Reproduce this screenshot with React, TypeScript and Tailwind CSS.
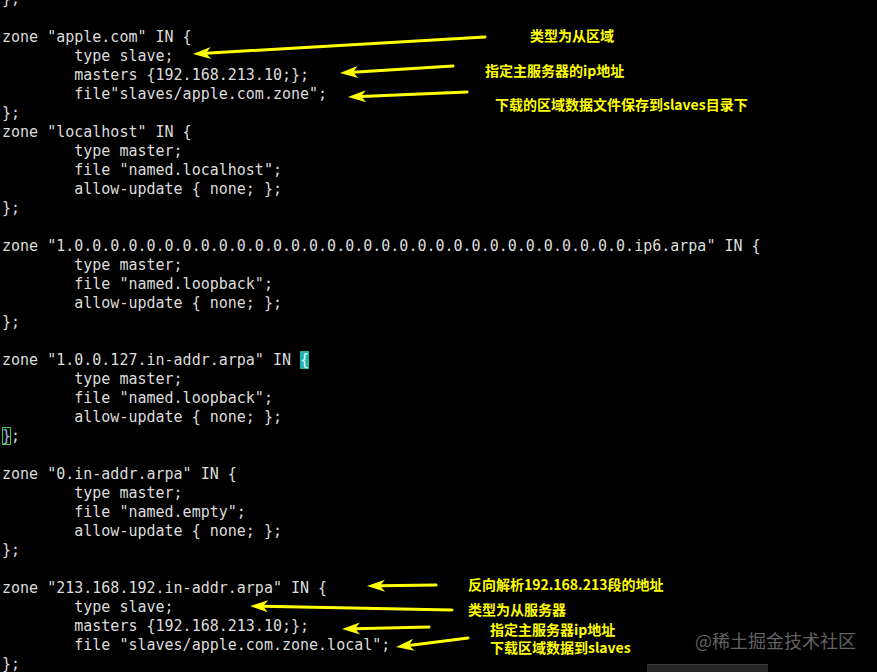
import React from 'react';

const T = '        ';

const lines: string[] = [
  '};',
  '',
  'zone "apple.com" IN {',
  `${T}type slave;`,
  `${T}masters {192.168.213.10;};`,
  `${T}file"slaves/apple.com.zone";`,
  '};',
  'zone "localhost" IN {',
  `${T}type master;`,
  `${T}file "named.localhost";`,
  `${T}allow-update { none; };`,
  '};',
  '',
  'zone "1.0.0.0.0.0.0.0.0.0.0.0.0.0.0.0.0.0.0.0.0.0.0.0.0.0.0.0.0.0.0.0.ip6.arpa" IN {',
  `${T}type master;`,
  `${T}file "named.loopback";`,
  `${T}allow-update { none; };`,
  '};',
  '',
  'CURSOR',
  `${T}type master;`,
  `${T}file "named.loopback";`,
  `${T}allow-update { none; };`,
  'MATCH',
  '',
  'zone "0.in-addr.arpa" IN {',
  `${T}type master;`,
  `${T}file "named.empty";`,
  `${T}allow-update { none; };`,
  '};',
  '',
  'zone "213.168.192.in-addr.arpa" IN {',
  `${T}type slave;`,
  `${T}masters {192.168.213.10;};`,
  `${T}file "slaves/apple.com.zone.local";`,
  '};',
];

// tail -> tip
const arrows: [number, number, number, number][] = [
  [485, 37, 193, 54],
  [453, 66, 340, 73],
  [467, 92, 348, 97],
  [436, 585, 367, 586],
  [452, 610, 250, 606],
  [429, 627, 342, 629],
  [468, 638, 396, 647],
];

const notes: { text: string[]; left: number; top: number }[] = [
  { text: ['类型为从区域'], left: 530, top: 26 },
  { text: ['指定主服务器的ip地址'], left: 485, top: 61 },
  { text: ['下载的区域数据文件保存到slaves目录下'], left: 495, top: 95 },
  { text: ['反向解析192.168.213段的地址'], left: 468, top: 575 },
  { text: ['类型为从服务器'], left: 468, top: 600 },
  { text: ['指定主服务器ip地址', '下载区域数据到slaves'], left: 490, top: 620 },
];

function Arrow({ a }: { a: [number, number, number, number] }) {
  const [x1, y1, x2, y2] = a;
  const dx = x2 - x1;
  const dy = y2 - y1;
  const len = Math.hypot(dx, dy);
  const ux = dx / len;
  const uy = dy / len;
  const nx = -uy;
  const ny = ux;
  const hl = 18;
  const hw = 6;
  const bx = x2 - ux * hl;
  const by = y2 - uy * hl;
  const kx = x2 - ux * (hl - 5);
  const ky = y2 - uy * (hl - 5);
  const pts = [
    [x2, y2],
    [bx + nx * hw, by + ny * hw],
    [kx, ky],
    [bx - nx * hw, by - ny * hw],
  ]
    .map((p) => p.join(','))
    .join(' ');
  return (
    <g>
      <line x1={x1} y1={y1} x2={kx} y2={ky} stroke="#ffff00" strokeWidth={3} strokeLinecap="round" />
      <polygon points={pts} fill="#ffff00" />
    </g>
  );
}

function Line({ text }: { text: string }) {
  if (text === 'CURSOR') {
    return (
      <div className="h-[19px] whitespace-pre">
        {'zone "1.0.0.127.in-addr.arpa" IN '}
        <span className="bg-[#1fb3ac] text-[#d8fbf8]">{'{'}</span>
      </div>
    );
  }
  if (text === 'MATCH') {
    return (
      <div className="h-[19px] whitespace-pre">
        <span className="outline outline-1 -outline-offset-1 outline-[#3fd13f] text-[#9fb8ff]">{'}'}</span>
        {';'}
      </div>
    );
  }
  return <div className="h-[19px] whitespace-pre">{text || ' '}</div>;
}

export default function App() {
  return (
    <div className="relative w-[877px] h-[672px] bg-black overflow-hidden">
      <div className="-mt-[10px] pl-[2px] text-[15px] leading-[19px] text-[#dcdcdc] font-['DejaVu_Sans_Mono',monospace]">
        {lines.map((l, i) => (
          <Line key={i} text={l} />
        ))}
      </div>

      <svg className="absolute inset-0 pointer-events-none" width={877} height={672}>
        {arrows.map((a, i) => (
          <Arrow key={i} a={a} />
        ))}
      </svg>

      {notes.map((n, i) => (
        <div
          key={i}
          className="absolute flex flex-col whitespace-nowrap text-[14px] leading-[18px] font-bold text-[#ffff00] font-['Noto_Sans_CJK_SC',sans-serif]"
          style={{ left: n.left, top: n.top }}
        >
          {n.text.map((t) => (
            <span key={t}>{t}</span>
          ))}
        </div>
      ))}

      <div className="absolute left-[695px] top-[629px] text-[18px] leading-[22px] text-[#626262] font-['Noto_Sans_CJK_SC',sans-serif]">
        @稀土掘金技术社区
      </div>
      <div className="absolute left-[647px] top-[664px] w-[121px] h-[8px] bg-[#262626] border-t border-[#3a3a3a]" />
    </div>
  );
}
